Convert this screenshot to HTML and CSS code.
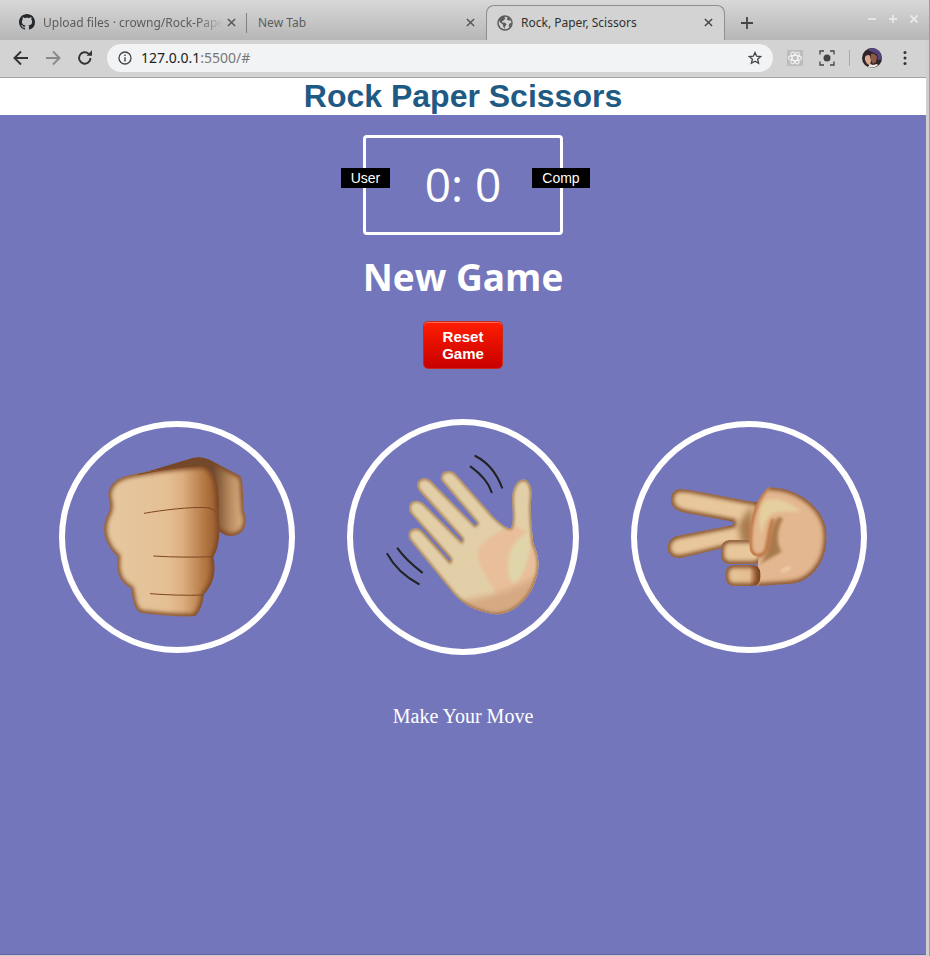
FILE: index.html
```html
<!DOCTYPE html>
<html lang="en">
<head>
<meta charset="utf-8">
<title>Rock, Paper, Scissors</title>
<link rel="stylesheet" href="styles.css">
</head>
<body>
<svg class="defs" width="0" height="0" aria-hidden="true">
  <defs>
    <filter id="soft" x="-20%" y="-20%" width="140%" height="140%"><feGaussianBlur stdDeviation="7"/></filter>
    <filter id="mid" x="-20%" y="-20%" width="140%" height="140%"><feGaussianBlur stdDeviation="4"/></filter>
    <filter id="softer" x="-30%" y="-30%" width="160%" height="160%"><feGaussianBlur stdDeviation="9"/></filter>
    <linearGradient id="fistFront" gradientUnits="userSpaceOnUse" x1="160" y1="0" x2="510" y2="0">
      <stop offset="0" stop-color="#e5c9a0"/><stop offset=".55" stop-color="#e5bf94"/><stop offset=".68" stop-color="#dcae80"/><stop offset=".88" stop-color="#b0743f"/><stop offset="1" stop-color="#94592f"/>
    </linearGradient>
    <linearGradient id="fistBack" gradientUnits="userSpaceOnUse" x1="490" y1="0" x2="590" y2="0">
      <stop offset="0" stop-color="#6f4a2e"/><stop offset=".5" stop-color="#b98a5e"/><stop offset="1" stop-color="#e6bd92"/>
    </linearGradient>
    <linearGradient id="pinkyShade" gradientUnits="userSpaceOnUse" x1="302" y1="0" x2="406" y2="0">
      <stop offset="0" stop-color="#e6c79a"/><stop offset=".68" stop-color="#e4bd90"/><stop offset=".84" stop-color="#a96f44"/><stop offset="1" stop-color="#7f4a2a"/>
    </linearGradient>
    <clipPath id="clipFist"><path d="M230 182C330 160 400 155 455 152C490 155 505 200 505 280C512 340 510 395 490 425C497 460 497 500 462 538C458 570 450 590 435 604C380 605 320 600 270 593C250 580 248 550 243 520C215 505 195 480 203 425C170 395 150 350 170 305Q182 285 180 265C165 225 185 195 230 182Z"/></clipPath>
    <clipPath id="clipFistBack"><path d="M265 178L430 128Q460 122 490 140L570 182Q578 190 578 220L582 290Q595 320 580 345Q560 370 525 360L500 345Z"/></clipPath>
    <clipPath id="clipHand"><path d="M303 195C298 170 325 160 345 175L460 305C480 325 500 340 512 340C522 325 518 290 516 250C518 210 535 195 550 193C570 195 577 220 574 250C570 280 575 340 580 385C600 430 600 460 585 500C565 560 510 600 465 598C410 590 370 570 340 535L210 375C195 350 220 330 245 345L330 440L332 432L212 295C195 265 225 245 250 265L365 380L367 372L238 228C220 200 245 180 270 195L405 332L412 325Z"/></clipPath>
    <clipPath id="clipV"><path d="M165 222C140 222 130 255 145 275C155 290 175 292 200 297L325 320L325 330L155 363C130 370 120 400 135 418C145 432 165 430 185 425L310 395L400 390L400 262L380 260L190 224Z"/></clipPath>
    <clipPath id="clipPalm"><path d="M430 217C520 217 605 280 605 365C605 450 550 505 490 507L395 513L400 425C385 425 376 415 374 400C370 350 375 270 430 217Z"/></clipPath>
    <clipPath id="clipRing"><rect x="288" y="375" width="124" height="72" rx="26"/></clipPath>
    <clipPath id="clipPinky"><rect x="302" y="450" width="104" height="63" rx="24"/></clipPath>
  </defs>
</svg>

<div class="window">
  <header class="tabstrip">
    <div class="tab">
      <svg class="favicon" viewBox="0 0 16 16"><path class="ink" d="M8 0C3.58 0 0 3.58 0 8c0 3.54 2.29 6.53 5.47 7.59.4.07.55-.17.55-.38 0-.19-.01-.82-.01-1.49-2.01.37-2.53-.49-2.69-.94-.09-.23-.48-.94-.82-1.13-.28-.15-.68-.52-.01-.53.63-.01 1.08.58 1.23.82.72 1.21 1.87.87 2.33.66.07-.52.28-.87.51-1.07-1.78-.2-3.64-.89-3.64-3.95 0-.87.31-1.59.82-2.15-.08-.2-.36-1.02.08-2.12 0 0 .67-.21 2.2.82.64-.18 1.32-.27 2-.27s1.36.09 2 .27c1.53-1.04 2.2-.82 2.2-.82.44 1.1.16 1.92.08 2.12.51.56.82 1.27.82 2.15 0 3.07-1.87 3.75-3.65 3.95.29.25.54.73.54 1.48 0 1.07-.01 1.93-.01 2.2 0 .21.15.46.55.38A8.01 8.01 0 0 0 16 8c0-4.42-3.58-8-8-8z"/></svg>
      <span class="tab-title tab-fade">Upload files · crowng/Rock-Pape</span>
      <svg class="close" viewBox="0 0 10 10"><path d="M1 1l8 8M9 1l-8 8"/></svg>
    </div>
    <div class="tab-sep"></div>
    <div class="tab tab-second">
      <span class="tab-title">New Tab</span>
      <svg class="close" viewBox="0 0 10 10"><path d="M1 1l8 8M9 1l-8 8"/></svg>
    </div>
    <div class="tab tab-active">
      <svg class="favicon" viewBox="0 0 16 16"><circle class="globe" cx="8" cy="8" r="7"/><path class="globe-land" d="M7 1.600C5 2 3 3.200 2 5l1 2.400 2.600 1.600.6 2.200L7.400 14l.6-2.600 1.600-1.800-1.400-1.800-2.600-.4-.8-1.200 1.800-.8L8.400 3.600zM10.600 2.200L9.800 4.400l1.600 1.200 2.400-.4c-.6-1.300-1.800-2.400-3.200-3zM14.200 8l-1.800.6-.8 2.400 1 1.400c1-1.200 1.600-2.800 1.600-4.400z"/></svg>
      <span class="tab-title tab-title-active">Rock, Paper, Scissors</span>
      <svg class="close close-active" viewBox="0 0 10 10"><path d="M1 1l8 8M9 1l-8 8"/></svg>
    </div>
    <svg class="newtab" viewBox="0 0 12 12"><path d="M6 0v12M0 6h12"/></svg>
    <div class="winctl">
      <svg viewBox="0 0 10 10"><path d="M1 5h8"/></svg>
      <svg viewBox="0 0 10 10"><path d="M1 5h8M5 1v8"/></svg>
      <svg viewBox="0 0 10 10"><path d="M1.500 1.500l7 7M8.500 1.500l-7 7"/></svg>
    </div>
  </header>

  <nav class="toolbar">
    <svg class="navicon" viewBox="0 0 16 16"><path class="nav-stroke" d="M15 8H2M8 1.500 1.500 8 8 14.500"/></svg>
    <svg class="navicon navicon-off" viewBox="0 0 16 16"><path class="nav-stroke" d="M1 8h13M8 1.500 14.500 8 8 14.500"/></svg>
    <svg class="navicon" viewBox="0 0 16 16"><path class="nav-stroke" d="M13.500 8A5.700 5.700 0 1 1 11.800 3.900"/><path class="ink-dark" d="M9.500 5.800H15V.3z"/></svg>
    <div class="omnibox">
      <svg class="info" viewBox="0 0 14 14"><circle class="info-ring" cx="7" cy="7" r="6"/><path class="info-mark" d="M7 6.200v4.300M7 3.400v1.500"/></svg>
      <span class="url">127.0.0.1<span class="url-dim">:5500/#</span></span>
      <svg class="star" viewBox="0 0 16 16"><path d="M8 1.700 9.900 6l4.600.4-3.500 3 1.100 4.600L8 11.600 3.900 14 5 9.400l-3.500-3L6.100 6z"/></svg>
    </div>
    <div class="ext-react">
      <svg viewBox="0 0 16 16"><g class="atom"><ellipse cx="8" cy="8" rx="6.500" ry="2.600"/><ellipse cx="8" cy="8" rx="6.500" ry="2.600" transform="rotate(60 8 8)"/><ellipse cx="8" cy="8" rx="6.500" ry="2.600" transform="rotate(120 8 8)"/></g></svg>
    </div>
    <svg class="ext-focus" viewBox="0 0 16 16"><path class="focus-frame" d="M1 4.500V1h4M11 1h4v3.500M15 11.500V15h-4M5 15H1v-3.500"/><circle class="focus-dot" cx="8" cy="8" r="3.500"/></svg>
    <div class="tool-sep"></div>
    <svg class="avatar" viewBox="0 0 20 20"><circle class="av-a" cx="10" cy="10" r="10"/><path class="av-b" d="M5 1.500C9-.5 15-.5 18.500 5L20 11l-4 1-1-6-5-2z"/><path class="av-c" d="M3 9c1-2 4-3 5-1l1 5-1 4c-2 0-4-2-5-5z"/><path class="av-d" d="M9 6c2-1 5 0 6 3l-1 5-3 2-2-4z"/><path class="av-e" d="M6 19l2-3 3 1 4-1 1 1c-3 3-7 3-10 2z"/></svg>
    <svg class="menu" viewBox="0 0 4 16"><circle cx="2" cy="2.500" r="1.500"/><circle cx="2" cy="8" r="1.500"/><circle cx="2" cy="13.500" r="1.500"/></svg>
  </nav>

  <div class="viewport">
    <h1 class="site-title">Rock Paper Scissors</h1>
    <main class="game">
      <section class="score">
        <span class="badge badge-user">User</span>
        <span class="score-value">0: 0</span>
        <span class="badge badge-comp">Comp</span>
      </section>
      <h2 class="status">New Game</h2>
      <button class="reset" type="button">Reset<br>Game</button>

      <div class="moves">
        <div class="move">
          <svg class="hand" viewBox="45 36 672 660">
            <g clip-path="url(#clipFistBack)">
              <path class="fill-fist-back" d="M265 178L430 128Q460 122 490 140L570 182Q578 190 578 220L582 290Q595 320 580 345Q560 370 525 360L500 345Z"/>
              <path class="edge" filter="url(#soft)" d="M265 178L430 128Q460 122 490 140L570 182Q578 190 578 220L582 290Q595 320 580 345Q560 370 525 360L500 345Z"/>
            </g>
            <g clip-path="url(#clipFist)">
              <path class="fill-fist" d="M230 182C330 160 400 155 455 152C490 155 505 200 505 280C512 340 510 395 490 425C497 460 497 500 462 538C458 570 450 590 435 604C380 605 320 600 270 593C250 580 248 550 243 520C215 505 195 480 203 425C170 395 150 350 170 305Q182 285 180 265C165 225 185 195 230 182Z"/>
              <path class="edge" filter="url(#soft)" d="M230 182C330 160 400 155 455 152C490 155 505 200 505 280C512 340 510 395 490 425C497 460 497 500 462 538C458 570 450 590 435 604C380 605 320 600 270 593C250 580 248 550 243 520C215 505 195 480 203 425C170 395 150 350 170 305Q182 285 180 265C165 225 185 195 230 182Z"/>
            </g>
            <path class="crease" d="M265 178C330 165 400 155 455 152C490 155 505 200 505 280M282 295C340 285 420 275 470 278Q490 280 497 292M310 423C370 427 430 427 490 425M300 536C350 540 410 542 462 540"/>
          </svg>
        </div>

        <div class="move move-paper">
          <svg class="hand" viewBox="39 30 660 672">
            <g clip-path="url(#clipHand)">
              <rect class="skin-light" x="190" y="150" width="420" height="460"/>
              <path class="skin-palm" filter="url(#mid)" d="M415 400C440 370 480 345 520 330L620 380L600 620L500 600L470 535C440 490 405 440 415 400Z"/>
              <path class="skin-glow" filter="url(#mid)" d="M515 400C530 370 555 360 570 345L572 390C560 470 535 510 515 505C500 480 500 430 515 400Z"/>
              <path class="skin-base" filter="url(#softer)" d="M360 560C420 545 480 545 600 480L600 620L400 620Z"/>
              <path class="edge edge-thin" filter="url(#mid)" d="M303 195C298 170 325 160 345 175L460 305C480 325 500 340 512 340C522 325 518 290 516 250C518 210 535 195 550 193C570 195 577 220 574 250C570 280 575 340 580 385C600 430 600 460 585 500C565 560 510 600 465 598C410 590 370 570 340 535L210 375C195 350 220 330 245 345L330 440L332 432L212 295C195 265 225 245 250 265L365 380L367 372L238 228C220 200 245 180 270 195L405 332L412 325Z"/>
            </g>
            <path class="wave" d="M392 155C420 175 445 200 455 232M406 123C440 140 470 175 486 218M173 400C190 425 220 452 246 472M142 417C160 450 195 485 236 507"/>
          </svg>
        </div>

        <div class="move">
          <svg class="hand" viewBox="36 36 672 660">
            <g clip-path="url(#clipV)">
              <path class="fill-peach" d="M165 222C140 222 130 255 145 275C155 290 175 292 200 297L325 320L325 330L155 363C130 370 120 400 135 418C145 432 165 430 185 425L310 395L400 390L400 262L380 260L190 224Z"/>
              <path class="edge" filter="url(#soft)" d="M165 222C140 222 130 255 145 275C155 290 175 292 200 297L325 320L325 330L155 363C130 370 120 400 135 418C145 432 165 430 185 425L310 395L400 390L400 262L380 260L190 224Z"/>
              <path class="shadow-fold" filter="url(#softer)" d="M380 270L340 330L350 385L390 390Z"/>
            </g>
            <g clip-path="url(#clipRing)">
              <rect class="fill-peach" x="288" y="375" width="124" height="72" rx="26"/>
              <rect class="edge" filter="url(#soft)" x="288" y="375" width="124" height="72" rx="26"/>
            </g>
            <g clip-path="url(#clipPalm)">
              <path class="fill-palm" d="M430 217C520 217 605 280 605 365C605 450 550 505 490 507L395 513L400 425C385 425 376 415 374 400C370 350 375 270 430 217Z"/>
              <path class="edge" filter="url(#soft)" d="M430 217C520 217 605 280 605 365C605 450 550 505 490 507L395 513"/>
              <path class="shadow-fold" filter="url(#mid)" d="M462 305C440 320 436 370 426 412L410 440L400 450L470 410C450 380 460 330 475 312Z"/>
              <path class="thumb-shine" filter="url(#mid)" d="M418 258C450 240 505 265 528 290C500 292 470 285 445 295C425 305 415 330 410 360C400 320 400 280 418 258Z"/>
              <path class="edge edge-warm" filter="url(#mid)" d="M430 217C385 260 372 340 376 398C380 425 405 430 422 410C432 380 432 340 445 312"/>
              <ellipse class="palm-shine" filter="url(#mid)" cx="482" cy="463" rx="16" ry="7" transform="rotate(-25 482 463)"/>
            </g>
            <g clip-path="url(#clipPinky)">
              <rect class="fill-pinky" x="302" y="450" width="104" height="63" rx="24"/>
              <rect class="edge" filter="url(#soft)" x="302" y="450" width="104" height="63" rx="24"/>
            </g>
          </svg>
        </div>
      </div>

      <p class="prompt">Make Your Move</p>
    </main>
  </div>
</div>
</body>
</html>
```

FILE: styles.css
```css
* { box-sizing: border-box; }
html, body { margin: 0; height: 100%; overflow: hidden; }
body { background: #cfcfcf; font-family: "Liberation Sans", Arial, sans-serif; }
.defs { position: absolute; }
.window { display: flex; flex-direction: column; width: 930px; height: 956px; border-right: 1px solid #9c9c9c; }

/* tab strip */
.tabstrip {
  display: flex; align-items: flex-end; height: 40px; padding-left: 8px;
  background: linear-gradient(#d8d8d8, #b6b6b6);
}
.tab { display: flex; align-items: center; width: 232px; height: 34px; padding: 0 4px 2px 11px; }
.tab-sep { width: 1px; height: 20px; margin: 0 0 7px 6px; background: #808080; }
.tab-second { width: 232px; padding-left: 11px; padding-right: 2px; }
.tab-active {
  width: 239px; height: 35px; margin-left: 7px; padding: 0 9px 1px 10px;
  background: #d3d3d3; border: 1px solid #8e8e8e; border-bottom: 0; border-radius: 8px 8px 0 0;
}
.favicon { flex: none; width: 16px; height: 16px; margin-right: 8px; }
.ink { fill: #24292e; }
.globe { fill: #d3d3d3; stroke: #5a5a5a; stroke-width: 1.500; }
.globe-land { fill: #5a5a5a; }
.tab-title {
  flex: 1; min-width: 0; white-space: nowrap;
  font: 12px "Noto Sans", sans-serif; color: #5c5c5c;
}
.tab-fade {
  flex: 0 0 180px; margin-right: 2px;
  -webkit-mask-image: linear-gradient(90deg, #000 86%, transparent);
  mask-image: linear-gradient(90deg, #000 86%, transparent);
}
.tab-title-active { color: #303030; }
.close { flex: none; width: 9px; height: 9px; margin: 0 2px; fill: none; stroke: #555; stroke-width: 1.600; }
.close-active { stroke: #444; }
.newtab { flex: none; width: 12px; height: 12px; margin: 0 0 11px 16px; fill: none; stroke: #444; stroke-width: 1.800; }
.winctl { display: flex; gap: 11px; margin: 0 10px 16px auto; }
.winctl svg { width: 10px; height: 10px; fill: none; stroke: #e8e8e8; stroke-width: 1.800; }

/* toolbar */
.toolbar {
  display: flex; align-items: center; height: 38px; padding: 0 0 2px 13px;
  background: #d3d3d3; border-bottom: 1px solid #a2a2a2; margin-right: 3px;
}
.navicon { flex: none; width: 16px; height: 16px; margin-right: 16px; }
.nav-stroke { fill: none; stroke: #333; stroke-width: 1.900; }
.navicon-off .nav-stroke { stroke: #8a8a8a; }
.ink-dark { fill: #333; }
.omnibox {
  display: flex; align-items: center; width: 666px; height: 28px; margin-left: -2px; padding: 0 11px 0 11px;
  background: #f1f3f4; border-radius: 14px;
}
.info { flex: none; width: 14px; height: 14px; margin-right: 9px; }
.info-ring { fill: none; stroke: #444; stroke-width: 1.300; }
.info-mark { fill: none; stroke: #444; stroke-width: 1.400; }
.url { flex: 1; font: 14px "Noto Sans", sans-serif; color: #222; }
.url-dim { color: #777; }
.star { flex: none; width: 14px; height: 14px; fill: none; stroke: #444; stroke-width: 1.500; }
.ext-react { flex: none; width: 16px; height: 16px; margin-left: 14px; background: #bdbdbd; }
.ext-react svg { display: block; }
.atom { fill: none; stroke: #f2f2f2; stroke-width: 1.100; }
.ext-focus { flex: none; width: 16px; height: 16px; margin-left: 16px; }
.focus-frame { fill: none; stroke: #444; stroke-width: 1.300; }
.focus-dot { fill: #444; }
.tool-sep { flex: none; width: 1px; height: 16px; margin-left: 14px; background: #a8a8a8; }
.avatar { flex: none; width: 20px; height: 20px; margin-left: 12px; }
.av-a { fill: #2f2529; }
.av-b { fill: #56447e; }
.av-c { fill: #d8a98c; }
.av-d { fill: #8f5a45; }
.av-e { fill: #efe6df; }
.menu { flex: none; width: 4px; height: 16px; margin-left: 21px; fill: #333; }

/* page */
.viewport {
  flex: 1; display: flex; flex-direction: column; margin: 0 3px 1px 0;
  background: #7476bc; border-bottom: 1px solid #66679f;
}
.site-title {
  margin: 0; height: 37px; background: #fff; color: #1f5a85; text-align: center;
  font: bold 32px/37px "Liberation Sans", Arial, sans-serif;
}
.game { flex: 1; display: flex; flex-direction: column; align-items: center; padding-top: 20px; }

.score {
  position: relative; display: flex; align-items: center; justify-content: center;
  width: 200px; height: 100px; border: 3px solid #fff; border-radius: 4px;
}
.score-value { font: 46px/1 "Open Sans", sans-serif; color: #fff; margin-top: -2px; }
.badge {
  position: absolute; top: 30px; height: 20px; background: #000; color: #fff;
  font: 14px/20px "Liberation Sans", Arial, sans-serif; text-align: center;
}
.badge-user { left: -25px; width: 49px; }
.badge-comp { right: -30px; width: 58px; }

.status { margin: 18px 0 0; height: 49px; font: bold 37px/48px "Open Sans", sans-serif; color: #fff; }

.reset {
  display: block; width: 80px; height: 48px; margin-top: 19px; padding: 0;
  border: 1px solid #c62a1e; border-radius: 5px; color: #fff;
  background: linear-gradient(#ff1d00, #c80000);
  box-shadow: inset 0 1px 0 #ff6a55;
  font: bold 15px/17px "Liberation Sans", Arial, sans-serif;
}

.moves { display: flex; align-items: center; justify-content: center; gap: 52px; margin-top: 50px; }
.move { width: 236px; height: 232px; border: 6px solid #fff; border-radius: 50%; }
.move-paper { width: 232px; height: 236px; }
.hand { display: block; width: 100%; height: 100%; }

.edge { fill: none; stroke: #7a4522; stroke-width: 15; }
.edge-thin { stroke: #94683f; stroke-width: 8; }
.edge-warm { stroke: #b96f3c; stroke-width: 11; }
.fill-fist { fill: url(#fistFront); }
.fill-fist-back { fill: url(#fistBack); }
.crease { fill: none; stroke: #7f4522; stroke-width: 3; }
.skin-light { fill: #e2cfa8; }
.skin-palm { fill: #e8bf9a; }
.skin-glow { fill: #e0d4aa; }
.skin-base { fill: #d6a982; }
.wave { fill: none; stroke: #222; stroke-width: 6; stroke-linecap: round; }
.fill-peach { fill: #e8c79b; }
.fill-palm { fill: #e3b78f; }
.fill-pinky { fill: url(#pinkyShade); }
.thumb-shine { fill: #e5cf9e; }
.shadow-fold { fill: #a97a4e; }
.palm-shine { fill: #eecba8; }

.prompt { margin: 49px 0 0; font: 20px/24px "Liberation Serif", "Times New Roman", serif; color: #fff; }
```
